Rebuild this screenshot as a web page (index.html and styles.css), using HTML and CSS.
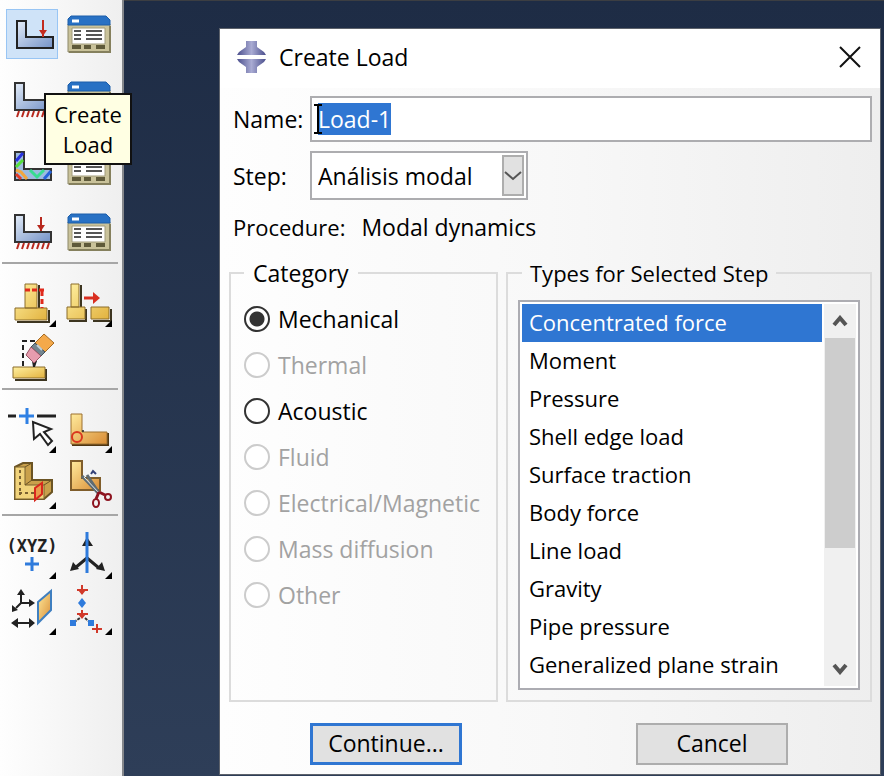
FILE: index.html
```html
<!DOCTYPE html>
<html lang="en">
<head>
<meta charset="utf-8">
<title>Create Load</title>
<link rel="stylesheet" href="styles.css">
</head>
<body>
<svg class="defs" aria-hidden="true">
  <defs>
    <linearGradient id="steel" x1="0" y1="0" x2="1" y2="1"><stop offset="0" stop-color="#e3ecf8"/><stop offset="1" stop-color="#7492c6"/></linearGradient>
    <linearGradient id="gold" x1="0" y1="0" x2="1" y2="1"><stop offset="0" stop-color="#fff0a0"/><stop offset="1" stop-color="#e2b23f"/></linearGradient>
    <linearGradient id="amber" x1="0" y1="0" x2="1" y2="1"><stop offset="0" stop-color="#ffeb9c"/><stop offset="1" stop-color="#d98c35"/></linearGradient>
    <linearGradient id="logo"><stop offset="0" stop-color="#4a4e8c"/><stop offset=".5" stop-color="#a9abd3"/><stop offset="1" stop-color="#4a4e8c"/></linearGradient>
    <symbol id="corner" viewBox="0 0 52 50"><path d="M50 43v7h-7z" fill="#000"/></symbol>
    <symbol id="manager" viewBox="0 0 52 50">
      <path d="M6 15h42v28H6z" fill="#c9c29a" stroke="#8d8868"/>
      <path d="M6 16v-6l3-3h35l4 4v5z" fill="#2871c4" stroke="#1c5eaa"/>
      <path d="M10 12h7" stroke="#fff" stroke-width="3"/>
      <path d="M10 19h33v16H10z" fill="#fff" stroke="#a29c7c"/>
      <path d="M12 22h7M12 26h7M12 30h7M24 22h16M24 26h16M24 30h16" stroke="#555" stroke-width="2"/>
      <path d="M10 38h9M22 38h7M34 38h9" stroke="#5f5a3a" stroke-width="4"/>
      <path d="M7 43h41V17" fill="none" stroke="#85805d" stroke-width="2"/>
    </symbol>
    <symbol id="fixed" viewBox="0 0 52 50">
      <path d="M9 8h9v17h27v10H9z" fill="url(#steel)" stroke="#333" stroke-width="2"/>
      <path d="M13 36l-2 6M18 36l-2 6M23 36l-2 6M28 36l-2 6M33 36l-2 6M38 36l-2 6M43 36l-2 6" stroke="#b8291e" stroke-width="2"/>
    </symbol>
  </defs>
</svg>

<div class="app">
  <nav class="toolbox" aria-label="Load toolbox">
    <div class="tools tools-wide">
      <button class="tool active" aria-label="Create Load"><svg viewBox="0 0 52 50">
        <path d="M11 12h9v16h27v11H11z" fill="url(#steel)" stroke="#222" stroke-width="2"/>
        <path d="M37 11v17" stroke="#c22b1f" stroke-width="2"/><path d="M33 21h8l-4 6z" fill="#c22b1f"/></svg></button>
      <button class="tool" aria-label="Load Manager"><svg viewBox="0 0 52 50"><use href="#manager"/></svg></button>
      <button class="tool" aria-label="Create Boundary Condition"><svg viewBox="0 0 52 50"><use href="#fixed"/></svg></button>
      <button class="tool" aria-label="Boundary Condition Manager"><svg viewBox="0 0 52 50"><use href="#manager"/></svg></button>
      <button class="tool" aria-label="Create Predefined Field"><svg viewBox="0 0 52 50">
        <path d="M9 11h9v17h27v11H9z" fill="#9dbbe0" stroke="#333" stroke-width="2"/>
        <path d="M10 20l7-8" stroke="#2731dd" stroke-width="3"/><path d="M10 26l7-7" stroke="#55e03c" stroke-width="3"/>
        <path d="M10 29l5 2 6 7" fill="none" stroke="#f3a63d" stroke-width="3"/><path d="M10 33l5 5" stroke="#e23a26" stroke-width="3"/>
        <path d="M24 29l7 7 7-7" fill="none" stroke="#38dd91" stroke-width="3"/><path d="M38 38l7-8" stroke="#2563dc" stroke-width="3"/></svg></button>
      <button class="tool" aria-label="Predefined Field Manager"><svg viewBox="0 0 52 50"><use href="#manager"/></svg></button>
      <button class="tool" aria-label="Create Load Case"><svg viewBox="0 0 52 50"><use href="#fixed"/>
        <path d="M35 10v14" stroke="#b8291e" stroke-width="2"/><path d="M31 18h8l-4 6z" fill="#b8291e"/></svg></button>
      <button class="tool" aria-label="Load Case Manager"><svg viewBox="0 0 52 50"><use href="#manager"/></svg></button>
    </div>
    <div class="tools">
      <button class="tool" aria-label="Partition Edge"><svg viewBox="0 0 52 50">
        <path d="M11 45h32V33M33 31V8" fill="none" stroke="#3d3520" stroke-width="2"/>
        <path d="M19 7h12v24H19zM9 31h32v12H9z" fill="url(#gold)" stroke="#8b6d2b"/>
        <path d="M19 13h20" stroke="#e02a1c" stroke-width="3" stroke-dasharray="5 2"/><path d="M36 14v17" stroke="#e02a1c" stroke-width="3" stroke-dasharray="5 3"/><use href="#corner"/></svg></button>
      <button class="tool" aria-label="Move Feature"><svg viewBox="0 0 52 50">
        <path d="M7 44h17V32M19 30V8M31 44h18V32" fill="none" stroke="#3d3520" stroke-width="2"/>
        <path d="M9 7h8v23H9zM5 30h18v12H5zM29 30h18v12H29z" fill="url(#gold)" stroke="#8b6d2b"/>
        <path d="M22 21h10" stroke="#d92f20" stroke-width="3"/><path d="M31 15l7 6-7 6z" fill="#d92f20"/><use href="#corner"/></svg></button>
      <button class="tool" aria-label="Delete Feature"><svg viewBox="0 0 52 50">
        <path d="M9 47h31V36" fill="none" stroke="#3d3520" stroke-width="2"/><path d="M7 34h32v11H7z" fill="url(#gold)" stroke="#8b6d2b"/>
        <path d="M17 33V8h12" fill="none" stroke="#222" stroke-width="2" stroke-dasharray="5 3"/><path d="M26 28h5l-2 6h-2z" fill="#222"/>
        <path d="M38 1l10 9-9 9-10-9z" fill="#f4a94a" stroke="#a56a22"/><path d="M29 10l10 9-4 4-10-9z" fill="#73858f" stroke="#43535c"/><path d="M31 12l5 5" stroke="#c4d1d6" stroke-width="2"/><path d="M25 14l10 9-7 7-8-8z" fill="#e79cae" stroke="#985463"/></svg></button>
    </div>
    <div class="tools">
      <button class="tool" aria-label="Select Point"><svg viewBox="0 0 52 50">
        <path d="M2 13h8M31 13h19" stroke="#222" stroke-width="3"/><path d="M13 13h15M21 5v16" stroke="#2f80e4" stroke-width="3"/>
        <path d="M27 19l1 17 6-5 8 11 4-4-8-9 7-3z" fill="#fff" stroke="#222" stroke-width="2"/><use href="#corner"/></svg></button>
      <button class="tool" aria-label="Blend"><svg viewBox="0 0 52 50">
        <path d="M10 42h36V30" fill="none" stroke="#4e3513" stroke-width="2"/><path d="M9 11h11v18h25v12H9z" fill="url(#amber)" stroke="#9c7130"/><circle cx="21" cy="28" r="1" fill="#222"/>
        <circle cx="15" cy="34" r="5" fill="none" stroke="#d9371e" stroke-width="2"/><use href="#corner"/></svg></button>
      <button class="tool" aria-label="Partition Cell"><svg viewBox="0 0 52 50">
        <path d="M9 8l8-4h9v17h20v12l-8 7H9z" fill="#c9a04b" stroke="#6b5424" stroke-width="2"/>
        <path d="M9 8h10v18h19v14H9z" fill="#f1d37b" stroke="#7a6330"/><path d="M19 8l7-4M19 26l7-5M38 26l8-5" stroke="#6b5424"/>
        <path d="M14 11v25M13 34h15" stroke="#7a6131" stroke-dasharray="3 3" stroke-width="2"/>
        <path d="M29 29l7-5v11l-7 6z" fill="#e99a4b" stroke="#d8281d" stroke-width="2"/><use href="#corner"/></svg></button>
      <button class="tool" aria-label="Cut"><svg viewBox="0 0 52 50">
        <path d="M9 2h11v17h18v12H9z" fill="url(#amber)" stroke="#7f5d2b" stroke-width="2"/><path d="M29 15l2-3 3 3" fill="none" stroke="#334078" stroke-width="2"/>
        <path d="M20 17l17 18M25 16l12 18" stroke="#5f6b72" stroke-width="3"/><path d="M22 18l15 16" stroke="#e6eef2"/>
        <path d="M37 33l-3 7M37 33l6 3" stroke="#8d1420" stroke-width="3"/><ellipse cx="34" cy="44" rx="3" ry="4" fill="none" stroke="#8d1420" stroke-width="2"/><circle cx="46" cy="38" r="3" fill="none" stroke="#8d1420" stroke-width="2"/></svg></button>
    </div>
    <div class="tools">
      <button class="tool" aria-label="Create Datum Point"><svg viewBox="0 0 52 50">
        <text class="xyz" x="26" y="23" text-anchor="middle">(XYZ)</text><path d="M19 35h14M26 28v14" stroke="#2f7bdc" stroke-width="3"/><use href="#corner"/></svg></button>
      <button class="tool" aria-label="Create Datum Axis"><svg viewBox="0 0 52 50">
        <path d="M25 29L13 39M25 29l12 10" stroke="#222" stroke-width="3"/><path d="M20 17l5-9 6 9zM8 42l3-9 6 7zM43 42l-3-9-6 7z" fill="#222"/>
        <path d="M25 3v41" stroke="#2f7bdc" stroke-width="3"/><use href="#corner"/></svg></button>
      <button class="tool" aria-label="Create Datum Plane"><svg viewBox="0 0 52 50">
        <path d="M15 9v9h9M15 18l-5 5M11 38h14" fill="none" stroke="#222" stroke-width="2"/><path d="M11 10l4-6 4 6zM23 14l6 4-6 4zM6 27v-7l6 5zM12 33v10l-7-5zM23 33v10l6-5z" fill="#222"/>
        <path d="M32 17L45 6v19L32 38z" fill="url(#amber)" stroke="#3f7fc0" stroke-width="2"/><use href="#corner"/></svg></button>
      <button class="tool" aria-label="Create Reference Point"><svg viewBox="0 0 52 50">
        <path d="M20 0v9M15 5h11M20 25v8M15 29h11" stroke="#d1392a" stroke-width="2"/><path d="M16 5h8l-4 5zM16 29h8l-4 5z" fill="#d1392a"/>
        <path d="M20 13l4 5-4 5-4-5z" fill="#2f7bdc"/><path d="M12 37l6-4M23 33l6 5" stroke="#333" stroke-width="2" stroke-dasharray="3 1"/><path d="M8 35h6v6H8zM26 35h6v6h-6z" fill="#2f7bdc"/><path d="M30 44h10M35 39v9" stroke="#d1392a" stroke-width="2"/><use href="#corner"/></svg></button>
    </div>
    <div class="tooltip" role="tooltip">Create Load</div>
  </nav>

  <main class="viewport">
    <form class="dialog" role="dialog" aria-labelledby="dialog-title">
      <header class="titlebar">
        <svg class="logo" viewBox="0 0 30 32" aria-hidden="true"><path d="M0 14l2-3 7-5V0h11v6l7 5 2 3zM0 18h29l-2 3-7 5v6H9v-6l-7-5z" fill="url(#logo)"/></svg>
        <h1 id="dialog-title">Create Load</h1>
        <button class="close" type="button" aria-label="Close"><svg viewBox="0 0 22 22"><path d="M1 1l20 20M21 1L1 21" stroke="#111" stroke-width="2"/></svg></button>
      </header>
      <div class="content">
        <div class="field">
          <label for="load-name">Name:</label>
          <div class="name-box"><input id="load-name" type="text" value="Load-1" autofocus>
            <svg class="ibeam" viewBox="0 0 8 30" aria-hidden="true"><path d="M0 1h8M4 1v28M0 29h8" stroke="#000" stroke-width="2"/></svg></div>
        </div>
        <div class="field">
          <label for="load-step">Step:</label>
          <div class="step-box"><select id="load-step"><option>Análisis modal</option></select>
            <span class="step-arrow"><svg viewBox="0 0 18 10"><path d="M1 1l8 7 8-7" fill="none" stroke="#555" stroke-width="2"/></svg></span></div>
        </div>
        <p class="procedure"><span class="term">Procedure:</span><span>Modal dynamics</span></p>
        <div class="groups">
          <fieldset class="category">
            <legend>Category</legend>
            <label><input type="radio" name="category" checked>Mechanical</label>
            <label><input type="radio" name="category" disabled>Thermal</label>
            <label><input type="radio" name="category">Acoustic</label>
            <label><input type="radio" name="category" disabled>Fluid</label>
            <label><input type="radio" name="category" disabled>Electrical/Magnetic</label>
            <label><input type="radio" name="category" disabled>Mass diffusion</label>
            <label><input type="radio" name="category" disabled>Other</label>
          </fieldset>
          <fieldset class="types">
            <legend>Types for Selected Step</legend>
            <div class="listbox">
              <select size="10" aria-label="Types for Selected Step">
                <option selected>Concentrated force</option>
                <option>Moment</option>
                <option>Pressure</option>
                <option>Shell edge load</option>
                <option>Surface traction</option>
                <option>Body force</option>
                <option>Line load</option>
                <option>Gravity</option>
                <option>Pipe pressure</option>
                <option>Generalized plane strain</option>
              </select>
              <div class="scrollbar" aria-hidden="true">
                <svg viewBox="0 0 16 12"><path d="M2 10l6-7 6 7" fill="none" stroke="#555" stroke-width="4"/></svg>
                <div class="track"><div class="thumb"></div></div>
                <svg viewBox="0 0 16 12"><path d="M2 2l6 7 6-7" fill="none" stroke="#555" stroke-width="4"/></svg>
              </div>
            </div>
          </fieldset>
        </div>
        <div class="actions">
          <button class="push default" type="button">Continue...</button>
          <button class="push" type="button">Cancel</button>
        </div>
      </div>
    </form>
  </main>
</div>
<script src="script.js"></script>
</body>
</html>
```
FILE: styles.css
```css
* { box-sizing: border-box; }
body {
  margin: 0;
  font: 23px/30px "Open Sans", "Noto Sans", sans-serif;
  color: #000;
}
button, input, select { font: inherit; color: inherit; margin: 0; border-radius: 0; }
.defs { position: absolute; width: 0; height: 0; }
.app { display: flex; min-height: 100vh; }

.toolbox {
  position: relative;
  flex: none;
  padding: 0 4px 0 2px;
  background: linear-gradient(90deg, #fefefe, #efefef);
  border-right: 2px solid #85878b;
}
.tools {
  display: grid;
  grid-template-columns: 52px 52px;
  gap: 6px 4px;
  padding: 13px 4px 5px;
  border-bottom: 2px solid #a6a6a6;
}
.tools:nth-child(4) { border-bottom: 0; }
.tools-wide { row-gap: 16px; padding-top: 9px; }
.tool { width: 52px; height: 50px; padding: 0; border: 0; background: none; }
.tool svg { display: block; width: 52px; height: 50px; }
.tool.active { background: #cfe3f8; box-shadow: inset 0 0 0 1px #98c5f4; }
.xyz { font: bold 17px "DejaVu Sans Mono", monospace; fill: #222; }
.tooltip {
  position: absolute;
  left: 44px;
  top: 93px;
  width: 88px;
  padding: 4px 6px;
  border: 2px solid #111;
  background: #ffffe3;
  font-size: 22px;
  text-align: center;
}

.viewport {
  flex: 1;
  display: flex;
  padding: 27px 3px 1px 95px;
  background: linear-gradient(#1e2c45, #2e3e58);
  border-top: 1px solid #3c3e42;
}
.dialog {
  flex: 1;
  display: flex;
  flex-direction: column;
  border: 1px solid #5d626b;
  background: #fff;
}
.titlebar { display: flex; align-items: center; height: 59px; padding: 0 19px 4px 17px; }
.titlebar h1 { flex: 1; margin: 0 0 0 12px; font-size: 23px; font-weight: 400; }
.logo { width: 30px; height: 32px; }
.close { padding: 0; border: 0; background: none; }
.close svg { display: block; width: 22px; height: 22px; }
.content {
  flex: 1;
  display: flex;
  flex-direction: column;
  padding: 8px 8px 9px 9px;
  background: linear-gradient(90deg, #fefefe, #f8f8f8 50%, #eee);
}
.field { display: flex; align-items: center; margin-bottom: 9px; padding-left: 4px; }
.field label { width: 77px; }
.name-box { position: relative; flex: 1; }
.name-box input {
  display: block;
  width: 100%;
  height: 46px;
  padding: 0 6px;
  border: 2px solid #adadb0;
  background: #fff;
  outline: 0;
}
.name-box input::selection { background: #2f76d2; color: #fff; }
.ibeam { position: absolute; left: 4px; top: 8px; width: 8px; height: 30px; }
.step-box { position: relative; }
.step-box select {
  display: block;
  width: 218px;
  height: 49px;
  padding: 0 30px 0 6px;
  border: 2px solid #adadb0;
  background: #fff;
  appearance: none;
}
.step-arrow {
  position: absolute;
  top: 4px;
  right: 4px;
  bottom: 4px;
  width: 22px;
  display: flex;
  align-items: center;
  justify-content: center;
  border: 2px solid #adadad;
  background: #e1e1e1;
  pointer-events: none;
}
.step-arrow svg { flex: none; width: 18px; height: 10px; }
.procedure { display: flex; gap: 16px; margin: 3px 0 16px; padding-left: 4px; }
.procedure .term { font-size: 22px; }

.groups { flex: 1; display: flex; gap: 8px; }
fieldset { margin: 0; padding: 0; min-width: 0; border: 2px solid #dcdcdc; }
legend { margin-left: 13px; padding: 0 9px; }
.category { flex: 0 0 269px; }
.category label { display: flex; align-items: center; gap: 8px; height: 46px; padding-left: 13px; }
.category legend + label { margin-top: 8px; }
.category input {
  appearance: none;
  flex: none;
  width: 26px;
  height: 26px;
  border: 2px solid #333;
  border-radius: 50%;
  background: #fff;
}
.category input:checked { background: radial-gradient(circle, #333 7px, #fff 8px); }
.category input:disabled { border-color: #ccc; }
.category label:has(:disabled) { color: #a2a2a2; }
.types { flex: 1; padding: 12px 10px 8px; }
.types legend { margin-left: 4px; padding: 0 8px; font-size: 22px; }
.listbox { display: flex; height: 390px; padding: 2px; border: 2px solid #acacb2; background: #fff; font-size: 22px; }
.listbox select {
  flex: 1;
  min-width: 0;
  height: 100%;
  padding: 0;
  border: 0;
  outline: 0;
  overflow: hidden;
  background: #fff;
  appearance: none;
}
.listbox option { min-height: 38px; padding: 3px 7px 5px; line-height: 30px; }
.listbox option:checked { background: #2f76d2 linear-gradient(#2f76d2, #2f76d2); color: #fff; -webkit-text-fill-color: #fff; }
.scrollbar { width: 34px; display: flex; flex-direction: column; align-items: center; background: #f0f0f0; border-left: 2px solid #fff; }
.scrollbar svg { flex: none; width: 16px; height: 12px; margin: 11px 0; }
.track { flex: 1; width: 30px; }
.thumb { height: 67%; background: #cdcdcd; }

.actions { display: flex; justify-content: space-between; margin-top: 21px; padding: 0 84px 0 81px; }
.push { width: 152px; height: 42px; padding: 0 0 2px; border: 2px solid #adadad; background: #e1e1e1; }
.push.default { border: 3px solid #2f76d2; }
```
FILE: script.js
```js
// The name is selected on opening so that typing replaces it.
const nameInput = document.getElementById("load-name");
nameInput.focus();
nameInput.select();
```
